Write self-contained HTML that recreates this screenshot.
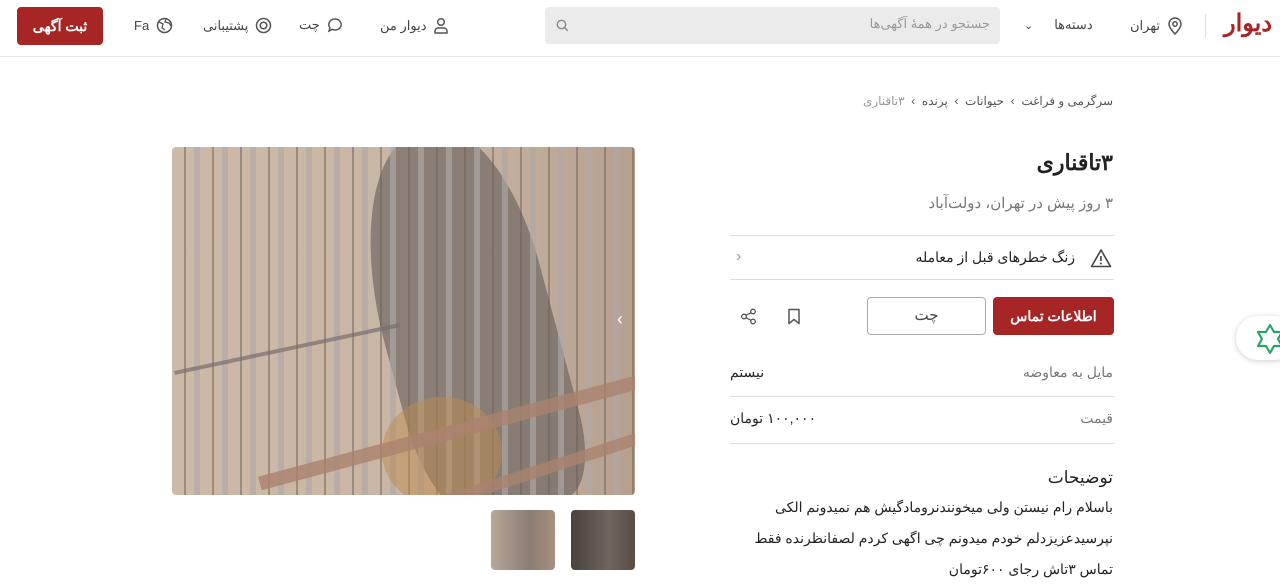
<!DOCTYPE html>
<html dir="rtl"><head><meta charset="utf-8"><style>
*{margin:0;padding:0;box-sizing:border-box}
body{width:1280px;height:570px;overflow:hidden;background:#fff;font-family:"Liberation Sans","Noto Sans CJK SC",sans-serif;color:#222;position:relative}
.hdr{position:absolute;top:0;left:0;width:1280px;height:57px;border-bottom:1px solid #e6e6e6;background:#fff}
.a{position:absolute;font-size:13px;color:#444;display:flex;align-items:center;gap:7px;direction:rtl}
svg{display:block}
.t{position:absolute;right:167px;direction:rtl}
.line{position:absolute;left:730px;width:384px;border-top:1px solid #ddd}
</style></head><body>
<div class="hdr">
 <div style="position:absolute;left:1205px;top:14px;width:1px;height:24px;background:#ddd"></div>
 <div style="position:absolute;left:1224px;top:9px;font-size:24px;font-weight:bold;color:#a62626">دیوار</div>
 <div class="a" style="left:1130px;top:17px">
  <svg width="16" height="18" viewBox="0 0 16 18"><path d="M8 17s6-6 6-10a6 6 0 0 0-12 0c0 4 6 10 6 10z" fill="none" stroke="#555" stroke-width="1.5"/><circle cx="8" cy="7" r="2.2" fill="none" stroke="#555" stroke-width="1.5"/></svg><span>تهران</span></div>
 <div class="a" style="left:1024px;top:17px"><span>دسته‌ها</span><span style="margin-right:14px;font-size:11px">⌄</span></div>
 <div style="position:absolute;left:545px;top:7px;width:455px;height:37px;background:#ebebeb;border-radius:4px">
  <span style="position:absolute;right:10px;top:9px;font-size:13px;color:#999">جستجو در همهٔ آگهی‌ها</span>
  <svg style="position:absolute;left:11px;top:12px" width="13" height="13" viewBox="0 0 13 13"><circle cx="5.5" cy="5.5" r="4.2" fill="none" stroke="#888" stroke-width="1.4"/><path d="M8.7 8.7l3 3" stroke="#888" stroke-width="1.4"/></svg>
 </div>
 <div class="a" style="left:380px;top:17px"><svg width="16" height="17" viewBox="0 0 16 17"><circle cx="8" cy="5" r="3.3" fill="none" stroke="#555" stroke-width="1.5"/><path d="M2 16v-2a3 3 0 0 1 3-3h6a3 3 0 0 1 3 3v2z" fill="none" stroke="#555" stroke-width="1.5"/></svg><span>دیوار من</span></div>
 <div class="a" style="left:299px;top:17px"><svg width="16" height="16" viewBox="0 0 16 16"><path d="M8 2a6 5.5 0 1 1-2.8 10.3L2 14l1-3.2A6 5.5 0 0 1 8 2z" fill="none" stroke="#555" stroke-width="1.5"/></svg><span>چت</span></div>
 <div class="a" style="left:203px;top:17px"><svg width="17" height="17" viewBox="0 0 17 17"><circle cx="8.5" cy="8.5" r="7" fill="none" stroke="#555" stroke-width="1.5"/><circle cx="8.5" cy="8.5" r="3.3" fill="none" stroke="#555" stroke-width="1.5"/></svg><span>پشتیبانی</span></div>
 <div class="a" style="left:134px;top:17px"><svg width="17" height="17" viewBox="0 0 17 17"><circle cx="8.5" cy="8.5" r="7" fill="none" stroke="#555" stroke-width="1.5"/><path d="M3 5l4 2-1 4 3 2M10 2l-1 3 4 1 2 3" fill="none" stroke="#555" stroke-width="1.3"/></svg><span style="direction:ltr">Fa</span></div>
 <div style="position:absolute;left:17px;top:7px;width:86px;height:38px;background:#a62626;border-radius:4px;color:#fff;font-size:14px;font-weight:bold;text-align:center;line-height:38px">ثبت آگهی</div>
</div>

<div class="t" style="top:94px;font-size:12px;color:#555;white-space:nowrap">سرگرمی و فراغت &nbsp;›&nbsp; حیوانات &nbsp;›&nbsp; پرنده &nbsp;›&nbsp; <span style="color:#999">۳تاقناری</span></div>
<div class="t" style="top:150px;font-size:22px;font-weight:bold;color:#222">۳تاقناری</div>
<div class="t" style="top:194px;font-size:15px;color:#777">۳ روز پیش در تهران، دولت‌آباد</div>
<div class="line" style="top:235px"></div>
<svg style="position:absolute;left:1090px;top:248px" width="22" height="20" viewBox="0 0 22 20"><path d="M11 2L20.5 18.5H1.5z" fill="none" stroke="#444" stroke-width="1.6" stroke-linejoin="round"/><path d="M11 8v5" stroke="#444" stroke-width="1.6"/><circle cx="11" cy="15.5" r="1" fill="#444"/></svg>
<div class="t" style="right:205px;top:249px;font-size:14px;color:#222">زنگ خطرهای قبل از معامله</div>
<div style="position:absolute;left:736px;top:248px;font-size:16px;color:#999">‹</div>
<div class="line" style="top:279px"></div>
<div style="position:absolute;left:993px;top:297px;width:121px;height:38px;background:#a62626;border-radius:4px;color:#fff;font-size:14px;font-weight:bold;text-align:center;line-height:38px">اطلاعات تماس</div>
<div style="position:absolute;left:867px;top:297px;width:119px;height:38px;border:1px solid #aaa;border-radius:4px;color:#444;font-size:15px;text-align:center;line-height:36px">چت</div>
<svg style="position:absolute;left:787px;top:308px" width="14" height="17" viewBox="0 0 14 17"><path d="M2 1.5h10v14l-5-4-5 4z" fill="none" stroke="#555" stroke-width="1.5" stroke-linejoin="round"/></svg>
<svg style="position:absolute;left:740px;top:308px" width="17" height="17" viewBox="0 0 17 17"><circle cx="4" cy="8.5" r="2.3" fill="none" stroke="#555" stroke-width="1.3"/><circle cx="13" cy="3.5" r="2.3" fill="none" stroke="#555" stroke-width="1.3"/><circle cx="13" cy="13.5" r="2.3" fill="none" stroke="#555" stroke-width="1.3"/><path d="M6 7.3l5-2.6M6 9.7l5 2.6" stroke="#555" stroke-width="1.3"/></svg>
<div class="t" style="top:364px;font-size:14px;color:#777">مایل به معاوضه</div>
<div style="position:absolute;left:730px;top:364px;font-size:14px;color:#222">نیستم</div>
<div class="line" style="top:396px"></div>
<div class="t" style="top:410px;font-size:14px;color:#777">قیمت</div>
<div style="position:absolute;left:730px;top:410px;font-size:14px;color:#222;direction:rtl">۱۰۰,۰۰۰ تومان</div>
<div class="line" style="top:443px"></div>
<div class="t" style="top:468px;font-size:17px;color:#222">توضیحات</div>
<div class="t" style="top:492px;width:390px;font-size:14px;line-height:31px;color:#222">باسلام رام نیستن ولی میخونندنرومادگیش هم نمیدونم الکی نپرسیدعزیزدلم خودم میدونم چی اگهی کردم لصفانظرنده فقط تماس ۳تاش رجای ۶۰۰تومان</div>

<div style="position:absolute;left:172px;top:147px;width:463px;height:348px;border-radius:4px;overflow:hidden;background:linear-gradient(90deg,#cdb9a8 0%,#c9b5a3 60%,#b5a090 100%)">
 <div style="position:absolute;left:210px;top:-20px;width:170px;height:390px;background:rgba(105,98,95,.65);border-radius:50% 40% 20% 30%;transform:rotate(-15deg)"></div>
 <div style="position:absolute;inset:0;background:repeating-linear-gradient(90deg,transparent 0 12px,rgba(110,95,85,.5) 12px 14px,transparent 14px 22px,rgba(175,168,165,.65) 22px 28px)"></div>
 <div style="position:absolute;left:210px;top:250px;width:120px;height:110px;background:rgba(190,140,80,.5);border-radius:50%"></div>
 <div style="position:absolute;left:80px;top:270px;width:460px;height:14px;background:rgba(170,130,110,.8);transform:rotate(-15deg)"></div>
 <div style="position:absolute;left:150px;top:320px;width:420px;height:12px;background:rgba(170,130,110,.8);transform:rotate(-18deg)"></div>
 <div style="position:absolute;left:0;top:200px;width:230px;height:4px;background:rgba(120,110,110,.7);transform:rotate(-12deg)"></div>
 <div style="position:absolute;right:12px;top:162px;color:#fff;font-size:18px">›</div>
</div>
<div style="position:absolute;left:491px;top:510px;width:64px;height:60px;border-radius:4px;background:linear-gradient(90deg,#b8a898,#8a7d74 60%,#a89080)"></div>
<div style="position:absolute;left:571px;top:510px;width:64px;height:60px;border-radius:4px;background:linear-gradient(90deg,#4a423d,#6e655e 60%,#5a4d43)"></div>

<div style="position:absolute;left:1236px;top:316px;width:60px;height:44px;border-radius:22px;background:#fff;box-shadow:0 1px 6px rgba(0,0,0,.2)">
 <svg style="position:absolute;left:20px;top:6px" width="28" height="32" viewBox="0 0 28 32"><path d="M14 3l4 7h8l-4 7 4 7h-8l-4 7-4-7H2l4-7-4-7h8z" fill="none" stroke="#2aa36b" stroke-width="2.2" stroke-linejoin="round"/></svg>
</div>
</body></html>
